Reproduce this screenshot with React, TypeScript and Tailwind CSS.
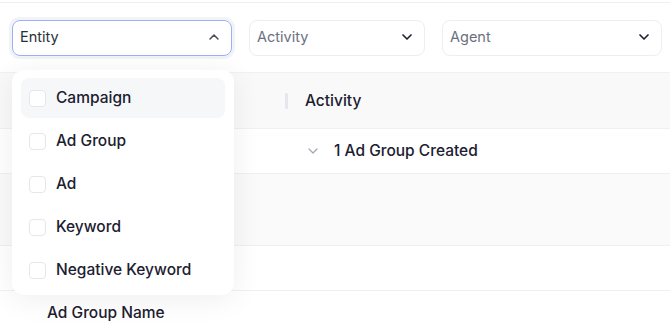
import React from "react";

const ChevronDown = ({ className = "", sw = 2.5 }: { className?: string; sw?: number }) => (
  <svg className={className} width="16" height="16" viewBox="0 0 24 24" fill="none" stroke="currentColor" strokeWidth={sw} strokeLinecap="round" strokeLinejoin="round">
    <path d="M6 9l6 6 6-6" />
  </svg>
);
const ChevronUp = ({ className = "" }: { className?: string }) => (
  <svg className={className} width="16" height="16" viewBox="0 0 24 24" fill="none" stroke="currentColor" strokeWidth="2.3" strokeLinecap="round" strokeLinejoin="round">
    <path d="M6 15l6-6 6 6" />
  </svg>
);

const items = ["Campaign", "Ad Group", "Ad", "Keyword", "Negative Keyword"];

export default function App() {
  return (
    <div className="relative w-[670px] h-[322px] overflow-hidden bg-white text-[#1c2030]" style={{ fontFamily: "Inter, 'Noto Sans', sans-serif" }}>
      <div className="h-[2px]" />
      <div className="border-t border-[#eeeff1] flex gap-[17px] pl-[12px] pt-[17px]">
        <div className="w-[220px] h-[36px] rounded-[8px] border border-[#9db0f5] ring-[3px] ring-[#f2f3f6] flex items-center justify-between pl-[7px] pr-[9px] pb-[2px] text-[14.5px] text-[#2a2f3c]">
          <span>Entity</span>
          <ChevronUp className="text-[#4a4f5c]" />
        </div>
        <div className="w-[176px] h-[36px] rounded-[8px] border border-[#eceef1] flex items-center justify-between pl-[7px] pr-[9px] pb-[2px] text-[14.5px] text-[#6b7080]">
          <span>Activity</span>
          <ChevronDown className="text-[#1c2030]" />
        </div>
        <div className="w-[220px] h-[36px] rounded-[8px] border border-[#eceef1] flex items-center justify-between pl-[7px] pr-[9px] pb-[2px] text-[14.5px] text-[#6b7080]">
          <span>Agent</span>
          <ChevronDown className="text-[#1c2030]" />
        </div>
      </div>

      <div className="mt-[16px] border-t border-[#f0f1f3]">
        <div className="h-[55px] bg-[#f9f9fa] flex items-center">
          <div className="w-[285px]" />
          <div className="w-[3px] h-[16px] bg-[#e6e7ec] rounded-sm" />
          <span className="ml-[17px] text-[15.5px] font-medium text-[#1c2030]">Activity</span>
        </div>
        <div className="h-[45px] border-t border-[#eef0f2] flex items-center">
          <div className="w-[305px]" />
          <ChevronDown className="text-[#a3a7b2]" sw={1.8} />
          <span className="ml-[13px] text-[15.5px] font-medium text-[#1c2030]">1 Ad Group Created</span>
        </div>
        <div className="h-[72px] border-t border-[#eef0f2] bg-[#fafafb]" />
        <div className="h-[45px] border-t border-[#eef0f2] bg-white" />
        <div className="h-[45px] border-t border-[#eef0f2] bg-white flex items-center pl-[47px] text-[15.5px] font-medium text-[#1c2030]">
          Ad Group Name
        </div>
      </div>

      <div className="absolute left-[12px] top-[70px] w-[222px] h-[225px] bg-white rounded-[12px] shadow-[0_4px_30px_rgba(0,0,0,0.07)] pt-[8px] px-[9px] flex flex-col gap-[3px]">
        {items.map((it, i) => (
          <div key={it} className={`h-[40px] rounded-[8px] flex items-center pl-[8px] gap-[10px] ${i === 0 ? "bg-[#f6f7f9]" : ""}`}>
            <div className="w-[17px] h-[17px] rounded-[4px] border border-[#e6e7eb] bg-white" />
            <span className="text-[15.5px] font-medium text-[#1c2030]">{it}</span>
          </div>
        ))}
      </div>
    </div>
  );
}
